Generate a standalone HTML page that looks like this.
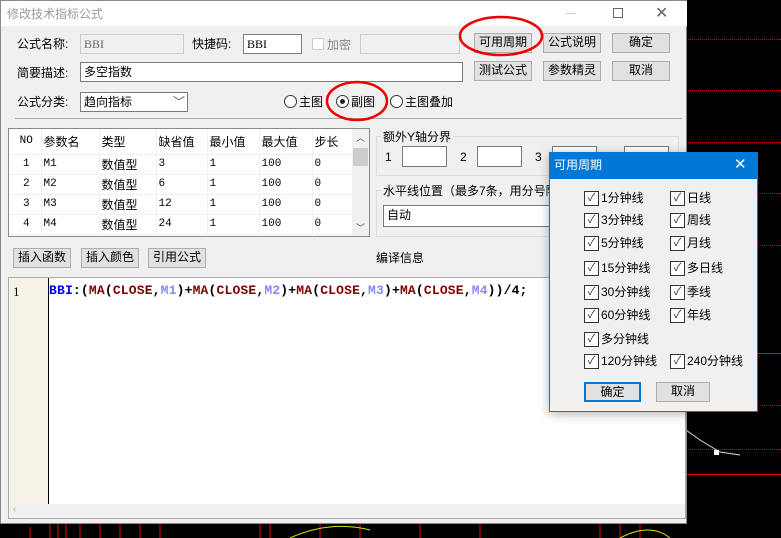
<!DOCTYPE html>
<html><head><meta charset="utf-8"><style>
*{box-sizing:border-box;margin:0;padding:0}
body{width:781px;height:538px;background:#000;position:relative;overflow:hidden;font-family:"Liberation Sans","Noto Sans CJK SC",sans-serif;font-size:12px;color:#000}
.a{position:absolute}
.dl{position:absolute;left:686px;right:0;border-top:1px dotted #c00}
.sl{position:absolute;left:686px;right:0;border-top:1px solid #e00}
.btn{position:absolute;background:#e1e1e1;border:1px solid #adadad;text-align:center;line-height:17px;font-size:12px}
.inp{position:absolute;background:#fff;border:1px solid #7a7a7a;font-size:12px;line-height:18px;padding-left:3px}
.lbl{position:absolute;font-size:12px;line-height:14px}
table{border-collapse:collapse}
td{height:20px;font-size:11px;padding-left:2px;border-bottom:1px solid #f0f0f0;border-right:1px solid #f0f0f0;font-family:"Liberation Mono","Noto Sans CJK SC",monospace}
td.c{font-family:"Liberation Sans","Noto Sans CJK SC",sans-serif;font-size:12px}
.cb{position:absolute;font-size:12px;line-height:14px;padding-left:17px}
.cb:before{content:"✓";position:absolute;left:0;top:0;width:13px;height:13px;border:1px solid #333;background:#fff;font-size:11px;line-height:12px;text-align:center;color:#333}
</style></head><body>
<div class="dl" style="top:39px"></div>
<div class="dl" style="top:90px"></div>
<div class="dl" style="top:142px"></div>
<div class="dl" style="top:193px"></div>
<div class="dl" style="top:245px"></div>
<div class="sl" style="top:353px"></div>
<div class="dl" style="top:405px"></div>
<div class="dl" style="top:449px"></div>
<div class="sl" style="top:474px"></div>
<svg class="a" style="left:0;top:0" width="781" height="538">
<path d="M686 430 L700 440 L720 452 L740 455" stroke="#ddd" fill="none"/>
<rect x="714" y="450" width="5" height="5" fill="#fff"/>
<g stroke="#e00">
<line x1="30" y1="527" x2="30" y2="538"/><line x1="50" y1="522" x2="50" y2="538"/><line x1="58" y1="522" x2="58" y2="538"/><line x1="66" y1="522" x2="66" y2="538"/><line x1="80" y1="522" x2="80" y2="538"/><line x1="100" y1="522" x2="100" y2="538"/><line x1="120" y1="522" x2="120" y2="538"/><line x1="140" y1="522" x2="140" y2="538"/><line x1="160" y1="522" x2="160" y2="538"/>
<line x1="260" y1="522" x2="260" y2="538"/><line x1="270" y1="522" x2="270" y2="538"/><line x1="320" y1="522" x2="320" y2="538"/><line x1="360" y1="522" x2="360" y2="538"/><line x1="420" y1="522" x2="420" y2="538"/><line x1="480" y1="522" x2="480" y2="538"/><line x1="600" y1="522" x2="600" y2="538"/><line x1="620" y1="522" x2="620" y2="538"/><line x1="640" y1="522" x2="640" y2="538"/></g>
<path d="M290 538 Q330 520 370 530 M620 538 Q650 522 670 538" stroke="#dd0" fill="none"/>
</svg>
<div class="a" style="left:0;top:0;width:687px;height:524px;background:#f0f0f0;border:1px solid #888">
<div class="a" style="left:0;top:0;width:686px;height:25px;background:#fff"></div>
<div class="lbl" style="left:6px;top:6px;color:#999">修改技术指标公式</div>
<div class="a" style="left:565px;top:12px;width:10px;border-top:1px solid #ccc"></div>
<div class="a" style="left:612px;top:7px;width:10px;height:10px;border:1px solid #666"></div>
<div class="a" style="left:654px;top:2px;font-size:16px;color:#666">✕</div>
</div>
<div class="lbl" style="left:17px;top:37px">公式名称:</div>
<div class="inp" style="left:80px;top:34px;width:104px;height:20px;background:#f0f0f0;border-color:#ccc;color:#666;font-family:'Liberation Serif',serif">BBI</div>
<div class="lbl" style="left:192px;top:37px">快捷码:</div>
<div class="inp" style="left:243px;top:34px;width:59px;height:20px;font-family:'Liberation Serif',serif">BBI</div>
<div class="a" style="left:312px;top:38px;width:12px;height:12px;border:1px solid #ccc;background:#fff"></div>
<div class="lbl" style="left:327px;top:38px;color:#888">加密</div>
<div class="a" style="left:360px;top:34px;width:100px;height:20px;border:1px solid #ccc"></div>
<div class="lbl" style="left:17px;top:66px">简要描述:</div>
<div class="inp" style="left:80px;top:62px;width:383px;height:20px">多空指数</div>
<div class="lbl" style="left:17px;top:95px">公式分类:</div>
<div class="inp" style="left:80px;top:92px;width:108px;height:20px">趋向指标<span class="a" style="left:92px;top:0;color:#555">﹀</span></div>
<div class="a" style="left:284px;top:95px;width:13px;height:13px;border:1px solid #333;border-radius:50%;background:#fff"></div>
<div class="lbl" style="left:299px;top:95px">主图</div>
<div class="a" style="left:336px;top:95px;width:13px;height:13px;border:1px solid #333;border-radius:50%;background:#fff"><div class="a" style="left:3px;top:3px;width:5px;height:5px;border-radius:50%;background:#222"></div></div>
<div class="lbl" style="left:351px;top:95px">副图</div>
<div class="a" style="left:390px;top:95px;width:13px;height:13px;border:1px solid #333;border-radius:50%;background:#fff"></div>
<div class="lbl" style="left:405px;top:95px">主图叠加</div>
<div class="a" style="left:15px;top:118px;width:667px;border-top:1px solid #aaa"></div>
<div class="btn" style="left:474px;top:33px;width:58px;height:20px">可用周期</div>
<div class="btn" style="left:543px;top:33px;width:58px;height:20px">公式说明</div>
<div class="btn" style="left:612px;top:33px;width:58px;height:20px">确定</div>
<div class="btn" style="left:474px;top:61px;width:58px;height:20px">测试公式</div>
<div class="btn" style="left:543px;top:61px;width:58px;height:20px">参数精灵</div>
<div class="btn" style="left:612px;top:61px;width:58px;height:20px">取消</div>
<div class="a" style="left:8px;top:128px;width:362px;height:109px;border:1px solid #888;background:#fff;overflow:hidden">
<table style="position:absolute;left:1px;top:0;width:343px">
<tr style="height:25px"><td class="c" style="width:31px;height:25px;text-align:center;font-family:'Liberation Mono';font-size:11px">NO</td><td class="c" style="width:58px">参数名</td><td class="c" style="width:57px">类型</td><td class="c" style="width:51px">缺省值</td><td class="c" style="width:52px">最小值</td><td class="c" style="width:53px">最大值</td><td class="c">步长</td></tr>
<tr><td style="text-align:center">1</td><td>M1</td><td class="c">数值型</td><td>3</td><td>1</td><td>100</td><td>0</td></tr>
<tr><td style="text-align:center">2</td><td>M2</td><td class="c">数值型</td><td>6</td><td>1</td><td>100</td><td>0</td></tr>
<tr><td style="text-align:center">3</td><td>M3</td><td class="c">数值型</td><td>12</td><td>1</td><td>100</td><td>0</td></tr>
<tr><td style="text-align:center">4</td><td>M4</td><td class="c">数值型</td><td>24</td><td>1</td><td>100</td><td>0</td></tr>
</table>
<div class="a" style="left:343px;top:0;width:17px;height:107px;background:#f0f0f0"><div class="a" style="left:1px;top:19px;width:15px;height:18px;background:#cdcdcd"></div><span class="a" style="left:4px;top:2px;font-size:9px;color:#555">︿</span><span class="a" style="left:4px;top:92px;font-size:9px;color:#555">﹀</span></div>
</div>
<div class="a" style="left:376px;top:136px;width:303px;height:40px;border:1px solid #ddd"></div>
<div class="lbl" style="left:381px;top:130px;background:#f0f0f0;padding:0 2px">额外Y轴分界</div>
<div class="lbl" style="left:385px;top:150px">1</div><div class="inp" style="left:402px;top:146px;width:45px;height:21px"></div>
<div class="lbl" style="left:460px;top:150px">2</div><div class="inp" style="left:477px;top:146px;width:45px;height:21px"></div>
<div class="lbl" style="left:535px;top:150px">3</div><div class="inp" style="left:552px;top:146px;width:45px;height:21px"></div>
<div class="inp" style="left:624px;top:146px;width:45px;height:21px"></div>
<div class="a" style="left:376px;top:190px;width:303px;height:47px;border:1px solid #ddd"></div>
<div class="lbl" style="left:381px;top:184px;background:#f0f0f0;padding:0 2px">水平线位置（最多7条，用分号隔开）</div>
<div class="inp" style="left:383px;top:205px;width:290px;height:22px">自动</div>
<div class="btn" style="left:13px;top:248px;width:58px;height:20px">插入函数</div>
<div class="btn" style="left:81px;top:248px;width:58px;height:20px">插入颜色</div>
<div class="btn" style="left:148px;top:248px;width:58px;height:20px">引用公式</div>
<div class="lbl" style="left:376px;top:251px">编译信息</div>
<div class="a" style="left:8px;top:277px;width:678px;height:242px;border:1px solid #aaa;background:#fff">
<div class="a" style="left:0;top:0;width:40px;height:226px;background:#f5f3e8;border-right:1px solid #000"></div>
<div class="a" style="left:4px;top:6px;font-family:'Liberation Serif',serif;font-size:13px">1</div>
<div class="a" style="left:40px;top:5px;font-family:'Liberation Mono',monospace;font-weight:bold;font-size:13px;letter-spacing:0.17px;color:#800000;white-space:pre"><span style="color:#00f">BBI</span><span style="color:#000">:(</span>MA<span style="color:#000">(</span>CLOSE<span style="color:#000">,</span><span style="color:#88f">M1</span><span style="color:#000">)+</span>MA<span style="color:#000">(</span>CLOSE<span style="color:#000">,</span><span style="color:#88f">M2</span><span style="color:#000">)+</span>MA<span style="color:#000">(</span>CLOSE<span style="color:#000">,</span><span style="color:#88f">M3</span><span style="color:#000">)+</span>MA<span style="color:#000">(</span>CLOSE<span style="color:#000">,</span><span style="color:#88f">M4</span><span style="color:#000">))/4;</span></div>
<div class="a" style="left:0;top:226px;width:676px;height:14px;background:#f0f0f0;color:#aaa;font-size:10px;padding-left:4px">‹</div>
</div>
<div class="a" style="left:549px;top:152px;width:209px;height:260px;background:#f0f0f0;border:1px solid #0078d7;box-shadow:0 2px 10px rgba(0,0,0,.3)">
<div class="a" style="left:0;top:0;width:207px;height:26px;background:#0078d7;color:#fff;font-size:12px;line-height:24px;padding-left:4px">可用周期<span class="a" style="left:184px;top:0;font-size:15px">✕</span></div>
<div class="cb" style="left:34px;top:38px">1分钟线</div><div class="cb" style="left:120px;top:38px">日线</div>
<div class="cb" style="left:34px;top:60px">3分钟线</div><div class="cb" style="left:120px;top:60px">周线</div>
<div class="cb" style="left:34px;top:83px">5分钟线</div><div class="cb" style="left:120px;top:83px">月线</div>
<div class="cb" style="left:34px;top:108px">15分钟线</div><div class="cb" style="left:120px;top:108px">多日线</div>
<div class="cb" style="left:34px;top:132px">30分钟线</div><div class="cb" style="left:120px;top:132px">季线</div>
<div class="cb" style="left:34px;top:155px">60分钟线</div><div class="cb" style="left:120px;top:155px">年线</div>
<div class="cb" style="left:34px;top:179px">多分钟线</div>
<div class="cb" style="left:34px;top:201px">120分钟线</div><div class="cb" style="left:120px;top:201px">240分钟线</div>
<div class="btn" style="left:34px;top:229px;width:57px;height:20px;border:2px solid #0078d7;line-height:16px">确定</div>
<div class="btn" style="left:106px;top:229px;width:54px;height:20px">取消</div>
</div>
<svg class="a" style="left:0;top:0" width="781" height="538">
<ellipse cx="501" cy="36" rx="41" ry="19" stroke="#e00" stroke-width="2.5" fill="none"/>
<ellipse cx="357" cy="101" rx="30" ry="19" stroke="#e00" stroke-width="2.5" fill="none"/>
</svg>
</body></html>
